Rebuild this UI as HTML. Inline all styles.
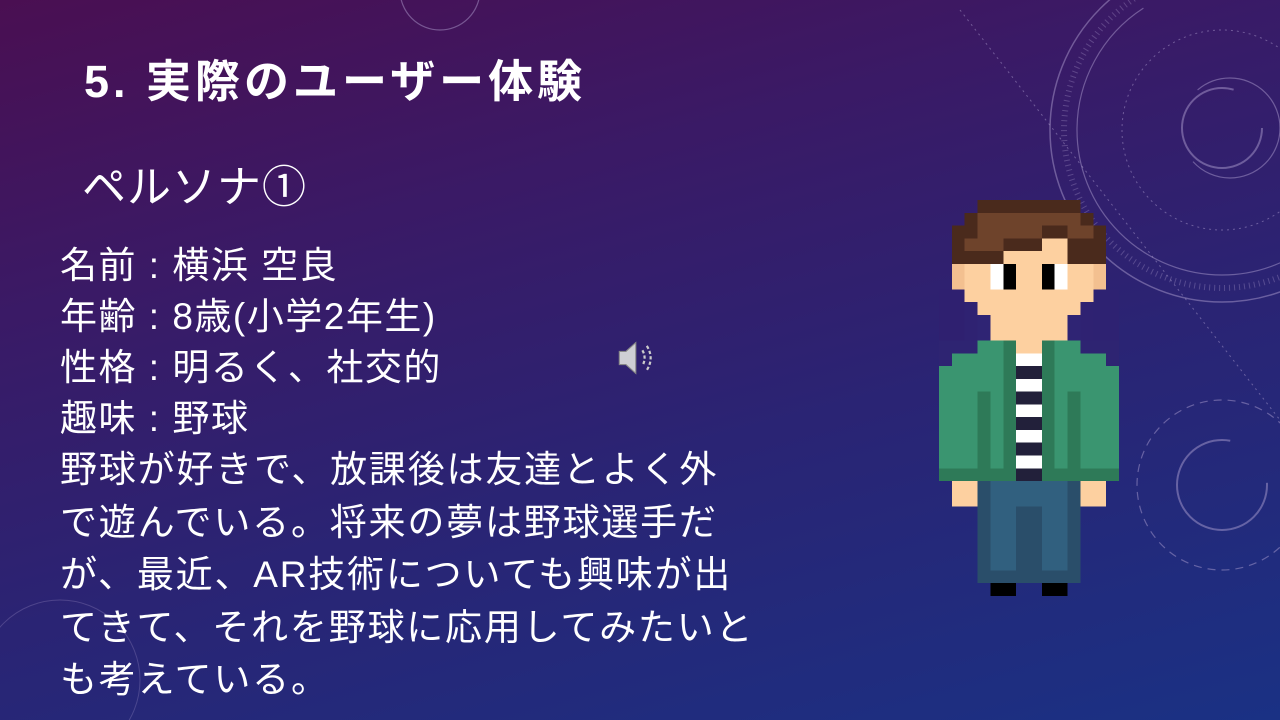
<!DOCTYPE html>
<html><head><meta charset="utf-8">
<style>
html,body{margin:0;padding:0;overflow:hidden}
body{width:1280px;height:720px;overflow:hidden;position:relative;
background:linear-gradient(165deg,#4a0f52 0%,#3a1a66 30%,#2a2474 60%,#1a3184 100%);
font-family:"Liberation Sans","Noto Sans CJK JP",sans-serif;color:#fff}
.t{position:absolute;white-space:nowrap}
</style></head><body>
<svg width="1280" height="720" style="position:absolute;left:0;top:0" fill="none" stroke="#b8a8d8" stroke-opacity="0.45">
<circle cx="1222" cy="130" r="172" stroke-width="1.5"/>
<circle cx="1222" cy="130" r="145" stroke-width="1.2" stroke-dasharray="600 300"/>
<circle cx="1222" cy="130" r="158" stroke-width="6" stroke-dasharray="1 4" stroke-opacity="0.3"/>
<circle cx="1222" cy="130" r="100" stroke-width="1" stroke-dasharray="2 4"/>
<circle cx="1222" cy="128" r="40" stroke-width="2" stroke-dasharray="200 60"/>
<circle cx="1230" cy="128" r="50" stroke-width="1.2" stroke-dasharray="120 80"/>
<circle cx="1222" cy="485" r="45" stroke-width="2" stroke-dasharray="220 60"/>
<circle cx="1222" cy="485" r="85" stroke-width="1.2" stroke-dasharray="8 6"/>
<circle cx="440" cy="-10" r="40" stroke-width="1.2"/>
<circle cx="60" cy="680" r="80" stroke-width="1" stroke-opacity="0.25"/>
<line x1="960" y1="10" x2="1280" y2="420" stroke-width="1" stroke-dasharray="2 4"/>
</svg>
<div class="t" style="left:84px;top:54px;font-size:45px;font-weight:bold;line-height:56px;letter-spacing:4px">5. 実際のユーザー体験</div>
<div class="t" style="left:82px;top:160px;font-size:44px;line-height:56px;letter-spacing:1px">ペルソナ①</div>
<div class="t" style="left:60px;top:240px;font-size:37px;line-height:51px;letter-spacing:1.5px">名前 : 横浜 空良<br>年齢 : 8歳(小学2年生)<br>性格 : 明るく、社交的<br>趣味 : 野球</div>
<div class="t" style="left:60px;top:444px;font-size:37px;line-height:52.5px;letter-spacing:1.8px">野球が好きで、放課後は友達とよく外<br>で遊んでいる。将来の夢は野球選手だ<br>が、最近、AR技術についても興味が出<br>てきて、それを野球に応用してみたいと<br>も考えている。</div>
<svg width="44" height="44" style="position:absolute;left:616px;top:336px" viewBox="0 0 40 40">
<path d="M3 14h6l9-8v28l-9-8H3z" fill="#cfcfd4" stroke="#888" stroke-width="1"/>
<path d="M24 13q4 7 0 14M28 9q7 11 0 22" stroke="#ccc" stroke-width="2" fill="none" stroke-dasharray="3 2"/>
</svg>
<svg width="180" height="396" style="position:absolute;left:939px;top:200px" viewBox="0 0 14 31" preserveAspectRatio="none" shape-rendering="crispEdges">
<rect x="3" y="0" width="8" height="1" fill="#4a2a1c"/>
<rect x="3" y="1" width="8" height="2" fill="#6e432b"/>
<rect x="2" y="1" width="1" height="2" fill="#4a2a1c"/><rect x="11" y="1" width="1" height="2" fill="#4a2a1c"/>
<rect x="1" y="3" width="12" height="8" fill="#fdd0a0"/>
<rect x="1" y="2" width="1" height="3" fill="#4a2a1c"/><rect x="12" y="2" width="1" height="3" fill="#4a2a1c"/>
<rect x="2" y="3" width="6" height="1" fill="#6e432b"/><rect x="8" y="2" width="2" height="1" fill="#4a2a1c"/>
<rect x="2" y="4" width="3" height="1" fill="#4a2a1c"/><rect x="5" y="3" width="3" height="1" fill="#4a2a1c"/>
<rect x="10" y="3" width="2" height="2" fill="#4a2a1c"/><rect x="11" y="2" width="1" height="1" fill="#6e432b"/>
<rect x="1" y="5" width="1" height="2" fill="#f3c090"/><rect x="12" y="5" width="1" height="2" fill="#f3c090"/>
<rect x="4" y="5" width="1" height="2" fill="#fff"/><rect x="5" y="5" width="1" height="2" fill="#000"/>
<rect x="8" y="5" width="1" height="2" fill="#000"/><rect x="9" y="5" width="1" height="2" fill="#fff"/>
<rect x="0" y="7" width="2" height="4" fill="#2f2070"/><rect x="12" y="7" width="2" height="4" fill="#2e2272"/>
<rect x="2" y="8" width="1" height="3" fill="#2f2272"/><rect x="11" y="8" width="1" height="3" fill="#2f2272"/>
<rect x="3" y="9" width="1" height="2" fill="#2f2474"/><rect x="10" y="9" width="1" height="2" fill="#2f2474"/>
<rect x="0" y="11" width="14" height="11" fill="#3a9570"/>
<rect x="0" y="11" width="3" height="1" fill="#2e2472"/><rect x="11" y="11" width="3" height="1" fill="#2e2472"/>
<rect x="0" y="12" width="1" height="1" fill="#2e2472"/><rect x="13" y="12" width="1" height="1" fill="#2e2472"/>
<rect x="5" y="11" width="1" height="11" fill="#2e7a58"/><rect x="8" y="11" width="1" height="11" fill="#2e7a58"/>
<rect x="3" y="15" width="1" height="6" fill="#2e7a58"/><rect x="10" y="15" width="1" height="6" fill="#2e7a58"/>
<rect x="0" y="21" width="14" height="1" fill="#2e7a58"/>
<rect x="6" y="11" width="2" height="1" fill="#fdd0a0"/>
<rect x="6" y="12" width="2" height="10" fill="#22203a"/>
<rect x="6" y="12" width="2" height="1" fill="#fff"/><rect x="6" y="14" width="2" height="1" fill="#fff"/>
<rect x="6" y="16" width="2" height="1" fill="#fff"/><rect x="6" y="18" width="2" height="1" fill="#fff"/><rect x="6" y="20" width="2" height="1" fill="#fff"/>
<rect x="1" y="22" width="2" height="2" fill="#fdd0a0"/><rect x="11" y="22" width="2" height="2" fill="#fdd0a0"/>
<rect x="3" y="22" width="8" height="8" fill="#2a4e6a"/>
<rect x="4" y="22" width="6" height="7" fill="#31607f"/>
<rect x="6" y="24" width="2" height="6" fill="#2a4e6a"/>
<rect x="4" y="30" width="2" height="1" fill="#000"/><rect x="8" y="30" width="2" height="1" fill="#000"/>
</svg>
</body></html>
